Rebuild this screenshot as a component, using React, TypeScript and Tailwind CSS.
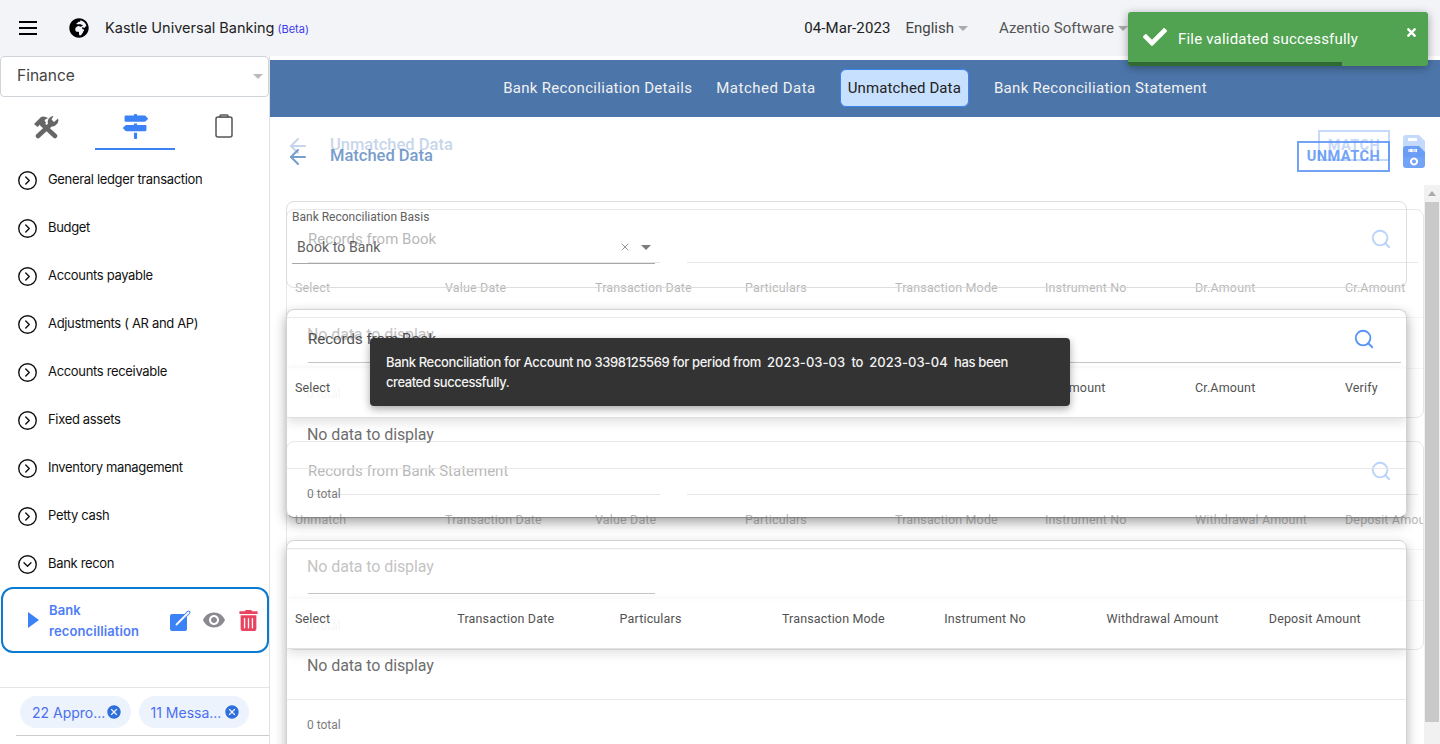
import React from "react";
import { ArrowLeft, CircleChevronDown, CircleChevronRight, Search, X } from "lucide-react";
import { FaCheck, FaGlobeAfrica, FaMapSigns, FaTimes, FaTrashAlt } from "react-icons/fa";
import { MdVisibility, MdCancel } from "react-icons/md";

const menu = [
  "General ledger transaction",
  "Budget",
  "Accounts payable",
  "Adjustments ( AR and AP)",
  "Accounts receivable",
  "Fixed assets",
  "Inventory management",
  "Petty cash",
];

function Caret({ className }: { className: string }) {
  return <span className={"inline-block h-0 w-0 border-x-[5px] border-t-[5px] border-x-transparent " + className} />;
}

function SaveIcon() {
  return (
    <svg className="ml-[13px] text-[#5b93f5]" width="22" height="22" viewBox="0 0 22 22" fill="currentColor">
      <path fillRule="evenodd" d="M3 0h13l6 6v13a3 3 0 0 1-3 3H3a3 3 0 0 1-3-3V3a3 3 0 0 1 3-3zM5 3v3h9V3zM11 11.500a4 4 0 1 0 .01 0zM11 13.500a2 2 0 1 1-.01 0z" />
    </svg>
  );
}

function ToolsIcon() {
  return (
    <svg className="ml-[-4px]" width="26" height="24" viewBox="0 0 26 24" fill="#666">
      <path d="M1 9 L8 2 Q11 0.500 15 3 L11.500 5 L13 8 L9 12 L7 9.500 L4.500 12 Z" />
      <path d="M9 9 L22 21" stroke="#666" strokeWidth="4.500" strokeLinecap="round" />
      <path d="M18 9 L5 21" stroke="#666" strokeWidth="4.500" strokeLinecap="round" />
      <path d="M25 3.500 A6 6 0 0 1 15.500 10 A6 6 0 0 1 20.500 1 L18.500 4.500 L21 7 Z" />
    </svg>
  );
}

function PageHead({ title, button, buttonClass }: { title: string; button: string; buttonClass: string }) {
  return (
    <div className="flex w-[1139px] items-center">
      <ArrowLeft className="text-[#5f8cc4]" size={24} strokeWidth={2} />
      <span className="ml-[20px] text-[16.5px] font-medium text-[#5f8cc4]">{title}</span>
      <span className={"ml-auto flex h-[31px] items-center justify-center border-2 border-[#5b93f5] pt-[1px] text-[14.5px] font-bold tracking-[0.5px] text-[#5b93f5] " + buttonClass}>
        {button}
      </span>
      <SaveIcon />
    </div>
  );
}

function HeaderRow({ cols, grid, raised }: { cols: string[]; grid: string; raised?: boolean }) {
  return (
    <div className={"mt-[5px] grid h-[50px] items-start overflow-hidden bg-white pl-[8px] pt-[11px] text-[12.5px] tracking-[0.15px] text-[#333] " + grid + (raised ? " shadow-[0_4px_10px_rgba(0,0,0,0.14)] border-b border-[#ddd]" : " border-b border-[#e5e5e5]")}>
      {cols.map((c) => (
        <span key={c} className="whitespace-nowrap">{c}</span>
      ))}
    </div>
  );
}

function TableCard({
  title,
  cols,
  grid,
  width,
  search,
  underline,
  raised,
  topClass,
  lineClass,
}: {
  title?: string;
  cols: string[];
  grid: string;
  width: string;
  search?: React.ReactNode;
  underline: React.ReactNode;
  raised?: boolean;
  topClass: string;
  lineClass: string;
}) {
  return (
    <section className={"overflow-hidden rounded-lg " + width + " " + topClass}>
      <div className={"mt-[7px] h-[46px] border-t " + lineClass}>
        <div className="flex h-[44px] items-center pl-[21px] pr-[31px]">
          <span className="mb-[2px] text-[15px] text-[#333]">{title}</span>
          <span className="mb-[2px] ml-auto">{search}</span>
        </div>
        {underline}
      </div>
      <HeaderRow cols={cols} grid={grid} raised={raised} />
      <div className="h-[50px] pl-[20px] pt-[5px] text-[16px] tracking-[-0.1px] text-[#555]">No data to display</div>
      <div className="border-t border-[#e6e6e6] pl-[20px] pt-[16px] text-[12px] text-[#666]">0 total</div>
    </section>
  );
}

function UnmatchedLayer() {
  const under = (
    <div className="flex gap-[27px] pl-[21px]">
      <div className="h-px w-[352px] bg-[#bbb]" />
      <div className="h-px w-[731px] bg-[#bbb]" />
    </div>
  );
  const icon = <Search className="text-[#3b82f6]" size={22} strokeWidth={2} />;
  return (
    <div className="absolute inset-y-0 left-0 w-[1154px] pl-[16px] pt-[13px] opacity-35">
      <PageHead title="Unmatched Data" button="MATCH" buttonClass="w-[72px]" />
      <div className="mt-[48px] flex flex-col gap-[23px]">
        <TableCard
          title="Records from Book"
          width="w-[1138px]"
          topClass="h-[209px] border border-[#bbb]"
          lineClass="border-transparent"
          search={icon}
          underline={under}
          grid="grid-cols-[repeat(8,150px)]"
          cols={["Select", "Value Date", "Transaction Date", "Particulars", "Transaction Mode", "Instrument No", "Dr.Amount", "Cr.Amount"]}
        />
        <TableCard
          title="Records from Bank Statement"
          width="w-[1138px]"
          topClass="h-[209px] border border-[#bbb]"
          lineClass="border-transparent"
          search={icon}
          underline={under}
          grid="grid-cols-[repeat(8,150px)]"
          cols={["Unmatch", "Transaction Date", "Value Date", "Particulars", "Transaction Mode", "Instrument No", "Withdrawal Amount", "Deposit Amount"]}
        />
      </div>
    </div>
  );
}

function MatchedLayer() {
  return (
    <div className="absolute inset-y-0 left-0 w-[1154px] pl-[16px] pt-[24px] opacity-85">
      <PageHead title="Matched Data" button="UNMATCH" buttonClass="w-[93px]" />
      <div className="mt-[29px] flex flex-col">
        <section className="h-[87px] w-[1121px] rounded-lg border border-[#d8d8d8]">
          <div className="pl-[5px] pt-[8px] text-[12px] leading-[14px] text-[#444]">Bank Reconciliation Basis</div>
          <div className="ml-[5px] mt-[7px] flex h-[33px] w-[363px] items-center border-b border-[#999] pl-[5px] text-[14px] tracking-[0.1px] text-[#444]">
            <span>Book to Bank</span>
            <X className="ml-auto text-[#888]" size={12} />
            <Caret className="ml-[10px] mr-[4px] border-t-[#666]" />
          </div>
        </section>
        <div className="mt-[21px]">
          <TableCard
            title="Records from Book"
            width="w-[1121px]"
            topClass="h-[209px] border border-[#ccc] border-b-[#777] shadow-[0_5px_12px_rgba(0,0,0,0.4)]"
            lineClass="border-[#e6e6e6]"
            raised
            search={<Search className="text-[#3b82f6]" size={22} strokeWidth={2} />}
            underline={<div className="ml-[21px] h-px w-[1093px] bg-[#bbb]" />}
            grid="grid-cols-[repeat(8,150px)]"
            cols={["Select", "Transaction Date", "Particulars", "Transaction Mode", "Instrument No", "Dr.Amount", "Cr.Amount", "Verify"]}
          />
        </div>
        <div className="mt-[22px]">
          <TableCard
            width="w-[1121px]"
            topClass="h-[240px] border border-[#ccc] shadow-[0_5px_12px_rgba(0,0,0,0.35)]"
            lineClass="border-[#e6e6e6]"
            raised
            underline={<div className="ml-[21px] h-px w-[347px] bg-[#bbb]" />}
            grid="grid-cols-[repeat(7,162.3px)]"
            cols={["Select", "Transaction Date", "Particulars", "Transaction Mode", "Instrument No", "Withdrawal Amount", "Deposit Amount"]}
          />
        </div>
      </div>
    </div>
  );
}

function Sidebar() {
  return (
    <aside className="flex w-[270px] shrink-0 flex-col border-r border-[#e2e2e2] bg-white font-[Inter]">
      <div className="flex h-[41px] w-[269px] shrink-0 items-center rounded border border-[#cfd4da] pl-[16px] pr-[5px] text-[15.5px] text-[#444]">
        <span className="mb-[1px]">Finance</span>
        <Caret className="ml-auto border-t-[#bbb]" />
      </div>
      <div className="mt-[8px] flex h-[45px] items-start">
        <div className="flex w-[95px] justify-center pt-[10px]"><ToolsIcon /></div>
        <div className="flex h-[45px] w-[80px] justify-center border-b-2 border-[#3b82f6] pt-[9px]"><FaMapSigns className="text-[#3b82f6]" size={25} /></div>
        <div className="flex w-[94px] justify-center pt-[9px] pl-[4px]">
          <svg width="18" height="24" viewBox="0 0 18 24" fill="none" stroke="#555" strokeWidth="1.5">
            <rect x="1" y="3" width="16" height="20" rx="2" />
            <path d="M5 3V2a1 1 0 0 1 1-1h6a1 1 0 0 1 1 1v1z" fill="#fff" />
          </svg>
        </div>
      </div>
      <nav className="mt-[6px] flex flex-col">
        {menu.map((m) => (
          <div key={m} className="flex h-[48px] items-center pl-[17px] text-[13px] tracking-[-0.33px] text-[#111]">
            <CircleChevronRight size={21} strokeWidth={1.6} />
            <span className="ml-[10px]">{m}</span>
          </div>
        ))}
        <div className="flex h-[48px] items-center pl-[17px] text-[13px] tracking-[-0.33px] text-[#111]">
          <CircleChevronDown size={21} strokeWidth={1.6} />
          <span className="ml-[10px]">Bank recon</span>
        </div>
      </nav>
      <div className="ml-px mt-[-1px] flex h-[66px] w-[268px] shrink-0 items-center rounded-xl border-2 border-[#0b7ad1] pl-[25px] text-[13px] font-semibold leading-[21px] tracking-[0.1px] text-[#4f7df5]">
        <svg width="11" height="16" viewBox="0 0 11 16" fill="#3b82f6"><path d="M0 0l11 8-11 8z" /></svg>
        <div className="ml-[10px] w-[110px] pt-[1px]">Bank<br />reconcilliation</div>
        <svg className="ml-[10px]" width="23" height="24" viewBox="0 0 23 24" fill="none">
          <rect x="1" y="6" width="17" height="17" rx="2" fill="#3b82f6" />
          <path d="M7.500 16.500L19.500 4.500" stroke="#3b82f6" strokeWidth="3.800" strokeLinecap="round" />
          <path d="M7.500 16.500L19.500 4.500" stroke="#fff" strokeWidth="1.800" strokeLinecap="round" />
        </svg>
        <MdVisibility className="ml-[10px] text-[#8a8a8f]" size={24} />
        <FaTrashAlt className="ml-[12px] text-[#ea4560]" size={21} />
      </div>
      <div className="mt-[34px] flex h-[48px] shrink-0 items-start gap-[8px] border-t border-[#e5e5e5] pl-[20px] pt-[8px]">
        {["22 Appro...", "11 Messa..."].map((c) => (
          <span key={c} className="flex h-[32px] w-[110.5px] items-center justify-between rounded-full bg-[#edf3fc] pl-[12px] pr-[9px] text-[14px] text-[#4a6ff0]">
            {c}
            <MdCancel className="text-[#2f6fdb]" size={16} />
          </span>
        ))}
      </div>
      <div className="ml-[16px] h-px bg-[#ccc]" />
    </aside>
  );
}

export default function App() {
  return (
    <div className="relative flex h-[744px] w-[1440px] flex-col overflow-hidden bg-white font-[Roboto]">
      <header className="flex h-[56px] shrink-0 items-center bg-[#f3f4f8] pr-[312px] text-[#333]">
        <div className="ml-[19px] flex w-[18px] flex-col gap-[4px]">
          <span className="h-[2px] bg-black" /><span className="h-[2px] bg-black" /><span className="h-[2px] bg-black" />
        </div>
        <FaGlobeAfrica className="ml-[32px] text-black" size={20} />
        <span className="ml-[16px] font-[Inter] text-[14.5px] text-[#222]">Kastle Universal Banking</span>
        <span className="ml-[3px] mt-[3px] font-[Inter] text-[11px] text-[#3b3bf0]">(Beta)</span>
        <span className="ml-auto text-[15px] tracking-[0.1px] text-[#222]">04-Mar-2023</span>
        <span className="ml-[15px] mt-[1px] text-[15px] text-[#444]">English</span>
        <Caret className="ml-[4px] border-t-[#aaa]" />
        <span className="ml-[31px] mt-[1px] text-[15px] tracking-[0.05px] text-[#555]">Azentio Software</span>
        <Caret className="ml-[4px] border-t-[#aaa]" />
      </header>
      <div className="flex min-h-0 flex-1">
        <Sidebar />
        <main className="flex min-w-0 flex-1 flex-col pt-[4px]">
          <nav className="flex h-[57px] shrink-0 items-center justify-center bg-[#4c76aa] text-[15px] tracking-[0.3px] text-[#f1f1f1]">
            <span className="px-[8px]">Bank Reconciliation Details</span>
            <span className="ml-[8px] px-[8px] tracking-[0.5px]">Matched Data</span>
            <span className="ml-[16px] mr-[17px] mb-[1px] flex h-[38px] items-center rounded-md border border-[#3b82f6] bg-[#c7e0fd] px-[7px] text-[15px] tracking-[0.12px] text-[#222]">Unmatched Data</span>
            <span className="px-[8px]">Bank Reconciliation Statement</span>
          </nav>
          <div className="relative min-h-0 flex-1">
            <UnmatchedLayer />
            <MatchedLayer />
            <div className="absolute bottom-0 right-0 top-[68px] w-[16px] bg-[#f1f1f1]">
              <div className="flex h-[17px] items-center justify-center">
                <span className="h-0 w-0 border-x-[4px] border-b-[5px] border-x-transparent border-b-[#aaa]" />
              </div>
              <div className="ml-px h-[520px] w-[14px] bg-[#c9c9c9]" />
            </div>
          </div>
        </main>
      </div>

      <div className="absolute left-[370px] top-[338px] h-[68px] w-[700px] whitespace-nowrap rounded bg-[#333] px-[16px] pt-[14px] font-[Inter] text-[13px] font-medium leading-[20px] tracking-[-0.35px] text-[#f2f2f2] shadow-[0_3px_8px_rgba(0,0,0,0.35)]">
        Bank Reconciliation for Account no 3398125569 for period from&nbsp; <span className="tracking-[0.05px]">2023-03-03</span>&nbsp; to&nbsp; <span className="tracking-[0.05px]">2023-03-04</span>&nbsp; has been<br />
        <span className="tracking-[-0.45px]">created successfully.</span>
      </div>

      <div className="absolute left-[1128px] top-[12px] h-[54px] w-[300px] overflow-hidden rounded-[3px] bg-[#51a351] text-white shadow-[0_2px_10px_rgba(0,0,0,0.35)]">
        <div className="flex h-[50px] items-center pl-[15px] pr-[10px]">
          <FaCheck size={24} />
          <span className="ml-[11px] mt-[4px] text-[15px] tracking-[0.2px]">File validated successfully</span>
          <FaTimes className="ml-auto mb-[10px]" size={13} />
        </div>
        <div className="h-[4px] w-[214px] bg-[#2f6b33]" />
      </div>
    </div>
  );
}
